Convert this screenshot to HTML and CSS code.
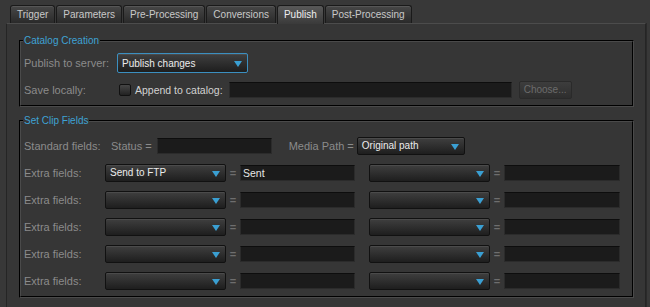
FILE: index.html
```html
<!DOCTYPE html>
<html lang="en">
<head>
  <meta charset="UTF-8" />
  <title>Publish</title>
  <link rel="stylesheet" href="styles.css">
</head>
<body>

  <div class="tabs">
    <div class="tab">Trigger</div>
    <div class="tab">Parameters</div>
    <div class="tab">Pre-Processing</div>
    <div class="tab">Conversions</div>
    <div class="tab active">Publish</div>
    <div class="tab">Post-Processing</div>
  </div>

  <div class="panel">

    <fieldset class="group catalog">
      <legend>Catalog Creation</legend>
      <div class="row">
        <span class="label wide">Publish to server:</span>
        <div class="select focus server">Publish changes<span class="caret"></span></div>
      </div>
      <div class="row">
        <span class="label wide">Save locally:</span>
        <span class="check"></span>
        <span class="check-label">Append to catalog:</span>
        <div class="field path"></div>
        <div class="button">Choose...</div>
      </div>
    </fieldset>

    <fieldset class="group clip">
      <legend>Set Clip Fields</legend>
      <div class="row tall">
        <span class="label">Standard fields:</span>
        <span class="sub-label">Status =</span>
        <div class="field status"></div>
        <span class="sub-label media">Media Path =</span>
        <div class="select media-path">Original path<span class="caret"></span></div>
      </div>
      <div class="row tall">
        <span class="label">Extra fields:</span>
        <div class="select">Send to FTP<span class="caret"></span></div>
        <span class="eq">=</span>
        <div class="field">Sent</div>
        <div class="select second"><span class="caret"></span></div>
        <span class="eq">=</span>
        <div class="field last"></div>
      </div>
      <div class="row tall">
        <span class="label">Extra fields:</span>
        <div class="select"><span class="caret"></span></div>
        <span class="eq">=</span>
        <div class="field"></div>
        <div class="select second"><span class="caret"></span></div>
        <span class="eq">=</span>
        <div class="field last"></div>
      </div>
      <div class="row tall">
        <span class="label">Extra fields:</span>
        <div class="select"><span class="caret"></span></div>
        <span class="eq">=</span>
        <div class="field"></div>
        <div class="select second"><span class="caret"></span></div>
        <span class="eq">=</span>
        <div class="field last"></div>
      </div>
      <div class="row tall">
        <span class="label">Extra fields:</span>
        <div class="select"><span class="caret"></span></div>
        <span class="eq">=</span>
        <div class="field"></div>
        <div class="select second"><span class="caret"></span></div>
        <span class="eq">=</span>
        <div class="field last"></div>
      </div>
      <div class="row tall">
        <span class="label">Extra fields:</span>
        <div class="select"><span class="caret"></span></div>
        <span class="eq">=</span>
        <div class="field"></div>
        <div class="select second"><span class="caret"></span></div>
        <span class="eq">=</span>
        <div class="field last"></div>
      </div>
    </fieldset>

  </div>

</body>
</html>
```

FILE: styles.css
```css
body {
  margin: 0;
  height: 307px;
  overflow: hidden;
  background: #383838;
  font-family: 'Liberation Sans', Arial, sans-serif;
}

/* Tab strip */
.tabs {
  display: flex;
  align-items: flex-end;
  gap: 1px;
  height: 18px;
  padding: 5px 0 0 10px;
}

.tab {
  box-sizing: border-box;
  height: 18px;
  padding: 0 6px;
  line-height: 17px;
  font-size: 10px;
  color: #c9c9c9;
  background: linear-gradient(#474747, #2a2a2a);
  border: 1px solid #1a1a1a;
  border-bottom: none;
  border-radius: 3px 3px 0 0;
  box-shadow: inset 0 1px 0 #565656;
}

.tab.active {
  position: relative;
  z-index: 1;
  height: 19px;
  margin-bottom: -1px;
  color: #eeeeee;
  background: linear-gradient(#595959, #3a3a3a);
}

/* Main panel */
.panel {
  box-sizing: border-box;
  width: 640px;
  height: 284px;
  margin-left: 6px;
  padding: 11px 11px 0 12px;
  background: #363636;
  border: 1px solid #252525;
  border-top-color: #4c4c4c;
  border-bottom: none;
  box-shadow: 1px 0 0 #2a2a2a;
}

.group {
  margin: 0;
  padding: 0 4px 4px 3px;
  min-width: 0;
  border: 2px groove #4a4a4a;
}

.group legend {
  margin-left: -1px;
  padding: 0 1px;
  font-size: 10px;
  line-height: 12px;
  color: #3ea2d4;
}

.group.clip {
  margin-top: 8px;
  padding-top: 5px;
  padding-bottom: 2px;
}

.row {
  display: flex;
  align-items: center;
  height: 22px;
  margin-top: 5px;
}

.row.tall {
  height: 27px;
  margin-top: 0;
}

.label {
  width: 81px;
  flex-shrink: 0;
  font-size: 11px;
  color: #8b8b8b;
}

.label.wide {
  width: 93px;
}

.sub-label {
  margin-left: 6px;
  font-size: 11px;
  color: #8b8b8b;
}

.sub-label.media {
  margin-left: 17px;
}

/* Controls */
.select {
  box-sizing: border-box;
  display: flex;
  align-items: center;
  justify-content: space-between;
  width: 121px;
  height: 18px;
  padding: 0 5px 0 4px;
  font-size: 10px;
  color: #ececec;
  background: linear-gradient(#3f3f3f, #1e1e1e);
  border: 1px solid #111;
  border-radius: 2px;
  box-shadow: inset 0 1px 0 #4b4b4b;
}

.select.second {
  margin-left: 14px;
}

.select.server {
  width: 131px;
  height: 20px;
  border-color: #3b8fc0;
}

.select.media-path {
  width: 108px;
  margin-left: 3px;
}

.caret {
  width: 0;
  height: 0;
  margin-left: auto;
  margin-top: 2px;
  border-left: 4px solid transparent;
  border-right: 4px solid transparent;
  border-top: 6px solid #3a9fd2;
}

.field {
  box-sizing: border-box;
  width: 115px;
  height: 16px;
  padding-left: 2px;
  line-height: 14px;
  font-size: 10.5px;
  color: #e6e6e6;
  background: #1b1b1b;
  border: 1px solid #2b2b2b;
  border-top-color: #0d0d0d;
}

.field.last {
  width: 116px;
}

.field.status {
  margin-left: 5px;
}

.field.path {
  width: 283px;
}

.eq {
  width: 14px;
  flex-shrink: 0;
  text-align: center;
  font-size: 11px;
  font-weight: bold;
  color: #6e6e6e;
}

.check {
  box-sizing: border-box;
  width: 12px;
  height: 12px;
  margin-left: 2px;
  background: linear-gradient(#464646, #222);
  border: 1px solid #111;
  border-radius: 2px;
}

.check-label {
  margin: 0 6px 0 4px;
  font-size: 10.5px;
  color: #d2d2d2;
}

.button {
  box-sizing: border-box;
  width: 53px;
  height: 18px;
  margin-left: 7px;
  line-height: 16px;
  text-align: center;
  font-size: 10px;
  color: #6c6c6c;
  background: linear-gradient(#3d3d3d, #2e2e2e);
  border: 1px solid #2a2a2a;
  border-radius: 2px;
}
```
